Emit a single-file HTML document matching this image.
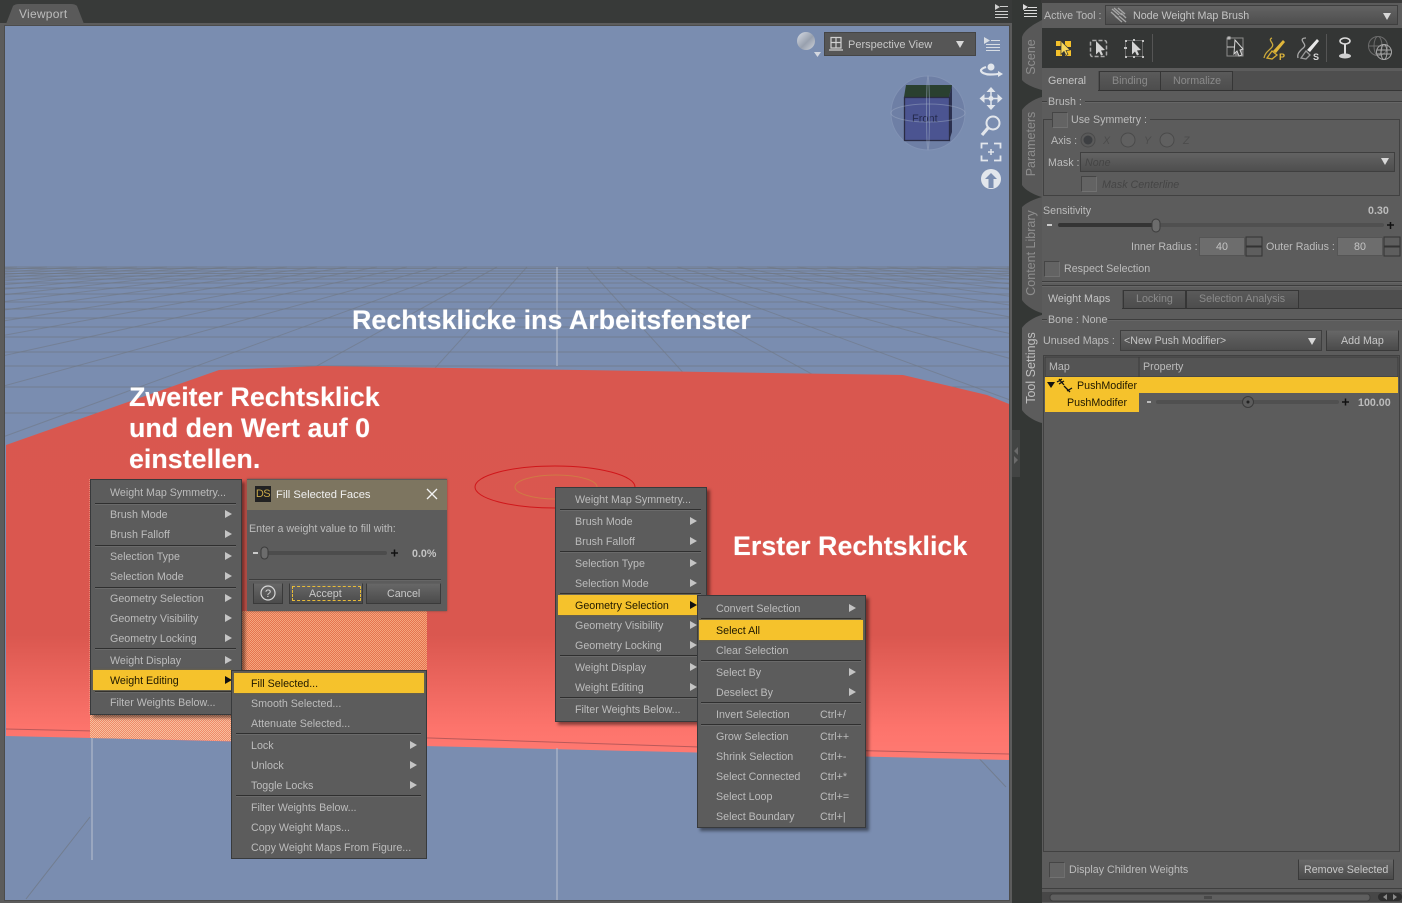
<!DOCTYPE html>
<html><head><meta charset="utf-8"><title>Viewport</title>
<style>
html,body{margin:0;padding:0;width:1402px;height:903px;overflow:hidden;background:#5c5c5c}
body{position:relative;font:10.7px "Liberation Sans",Arial,sans-serif;color:#bcbcbc}
.b{position:absolute;box-sizing:border-box}
.t{position:absolute;white-space:nowrap;line-height:14px;height:14px;margin-top:1px}
svg{position:absolute;left:0;top:0}
.h{position:absolute;color:#fff;font-weight:bold;font-size:26.85px;line-height:31px;white-space:nowrap;margin-top:1px;text-shadow:0 0 1px rgba(255,255,255,.4)}
.m{position:absolute;box-sizing:border-box;background:#5c5c5c;border:1px solid #383a3c;box-shadow:3px 3px 3px rgba(0,0,0,.45)}
.s{position:absolute;height:1px;background:#2f2f2f;box-shadow:0 1px 0 #6a6a6a}
.y{position:absolute;background:#f5c22c;box-shadow:0 0 2px #7a6a30}
.k{color:#1f1800}
.a{position:absolute;width:0;height:0;border-left:7px solid #c4c4c4;border-top:4px solid transparent;border-bottom:4px solid transparent}
.btn{position:absolute;box-sizing:border-box;background:linear-gradient(#676767,#4b4b4b);border:1px solid #3a3a3a;border-top-color:#5f5f5f}
.dd{position:absolute;box-sizing:border-box;background:linear-gradient(#636363,#4e4e4e);border:1px solid #3f3f3f}
.tri{position:absolute;width:0;height:0;border-top:7px solid #d8d8d8;border-left:4px solid transparent;border-right:4px solid transparent}
.tab{position:absolute;box-sizing:border-box;background:linear-gradient(#5a5a5a,#4d4d4d);border:1px solid #363636;border-bottom-color:#333;color:#8a8a8a}
.cb{position:absolute;box-sizing:border-box;width:16px;height:16px;background:#636363;border:1px solid #454545;border-right-color:#6f6f6f;border-bottom-color:#727272}
.l{position:absolute;height:1px;background:#3d3d3d;box-shadow:0 1px 0 #666}
</style></head><body>

<!-- top bar + viewport svg -->
<svg width="1402" height="903" viewBox="0 0 1402 903">
<defs>
<linearGradient id="rd" gradientUnits="userSpaceOnUse" x1="0" y1="370" x2="0" y2="760">
<stop offset="0" stop-color="#d9574f"/><stop offset=".68" stop-color="#da574f"/><stop offset=".92" stop-color="#fd746c"/><stop offset="1" stop-color="#ff7a72"/></linearGradient>
<pattern id="ch" width="2" height="2" patternUnits="userSpaceOnUse"><rect width="2" height="2" fill="#e6734e"/><rect width="1" height="1" fill="#f4a67e"/><rect x="1" y="1" width="1" height="1" fill="#f4a67e"/></pattern>
<pattern id="ch2" width="2" height="2" patternUnits="userSpaceOnUse"><rect width="2" height="2" fill="#f08a68"/><rect width="1" height="1" fill="#f7bf9e"/><rect x="1" y="1" width="1" height="1" fill="#f7bf9e"/></pattern>
<linearGradient id="sph" x1="0" y1="0" x2="1" y2="1"><stop offset="0" stop-color="#d8dde6"/><stop offset=".55" stop-color="#98a0ae"/><stop offset="1" stop-color="#d0d4da"/></linearGradient>
<clipPath id="vp"><rect x="5" y="26" width="1004" height="874"/></clipPath>
</defs>
<rect width="1012" height="903" fill="#5c5c5c"/>
<rect width="1012" height="23" fill="#383a39"/>
<path d="M6 24 L13 6 Q15 4 19 4 L71 4 Q75 4 77 6 L84 24Z" fill="#5a5a5a"/>
<rect x="5" y="26" width="1004" height="874" fill="#7a8db0"/>
<rect x="4.500" y="25.500" width="1005" height="875" fill="none" stroke="#4c4c4c"/>
<!-- grid -->
<g clip-path="url(#vp)" fill="none" stroke="#6f7682">
<path opacity=".7" d="M5 267H1009M5 268.500H1009M5 271H1009M5 273.500H1009M5 276H1009M5 279H1009M5 283H1009M5 288H1009M5 294H1009M5 302H1009M5 309H1009M5 318H1009M5 327H1009M5 337H1009M5 352H1009M5 366H1009M5 387H1009M5 413H1009"/>
<path opacity=".55" d="M587 267L749 445M617 267L941 445M647 267L1133 445M677 267L1325 445M707 267L1517 445M737 267L1709 445M767 267L1901 445M797 267L2093 445M827 267L2285 445M857 267L2477 445M887 267L2669 445M917 267L2861 445M947 267L3053 445M977 267L3245 445M1007 267L3437 445M527 267L365 445M497 267L173 445M467 267L-19 445M437 267L-211 445M407 267L-403 445M377 267L-595 445M347 267L-787 445M317 267L-979 445M287 267L-1171 445M257 267L-1363 445M227 267L-1555 445M197 267L-1747 445M167 267L-1939 445M137 267L-2131 445M107 267L-2323 445M77 267L-2515 445M47 267L-2707 445M17 267L-2899 445"/>
<path opacity=".7" d="M90 817L26 899M974 753L1006 787"/>
</g>
<path d="M557 267V366M92 730V860" stroke="#b9c1cf" stroke-width="1"/>
<!-- red -->
<path d="M6 445L219 370L322 366L903 375L987 395L1009 404V760L6 736Z" fill="url(#rd)"/>
<path d="M6 729L230 734L430 738L700 747L1009 754" stroke="#b9595a" fill="none"/>
<path d="M557 748V900" stroke="#b9c1cf"/>
<ellipse cx="555" cy="487" rx="80" ry="21" fill="none" stroke="#d0161a" stroke-width="1"/>
<ellipse cx="556" cy="487" rx="41" ry="12" fill="none" stroke="#cf7a45" stroke-width="1"/>
<!-- selection hatch -->
<rect x="242" y="611" width="185" height="60" fill="url(#ch)"/>
<path d="M90 715H232V741L90 738Z" fill="url(#ch2)"/>
<path d="M90 479V715" stroke="#f0b89a" stroke-dasharray="1 1"/>
<!-- sphere + nav -->
<circle cx="806" cy="41" r="9" fill="url(#sph)"/>
<path d="M814 52h7l-3.500 5z" fill="#d4d8e0"/>
<circle cx="928" cy="113" r="37" fill="#6e7fa5" stroke="#8192b4" stroke-width="1"/>
<path d="M906 85L952 85L949 97L904 97Z" fill="#2a4030"/>
<path d="M949 97L952 85V132L949 141Z" fill="#2c3150"/>
<rect x="904.500" y="97.500" width="45" height="43" fill="#4b5491" stroke="#2a2c44" stroke-width="1.300"/>
<text x="912" y="122" font-family="Liberation Sans" font-size="11" fill="#252a4d">Front</text>
<ellipse cx="928" cy="113" rx="37" ry="9" fill="none" stroke="#a0adc6" stroke-width="1" opacity=".45"/>
<ellipse cx="928" cy="113" rx="1.500" ry="37" fill="none" stroke="#a0adc6" stroke-width="1" opacity=".5"/>
<!-- nav icons -->
<g stroke="#e2e6ec" fill="none">
<path d="M986 67c-3 1-5 2-5 3.500c0 2 4 4 9 4c4 0 7 0 10-1" stroke-width="2.200"/>
<circle cx="991" cy="67" r="3.500" fill="#e2e6ec" stroke="none"/>
<path d="M998 71l5 3l-5 3z" fill="#e2e6ec" stroke="none"/>
<path d="M991 87l4.500 5h-9zM991 110l4.500-5h-9zM979.500 98.500l5-4.500v9zM1002.500 98.500l-5-4.500v9z" fill="#e2e6ec" stroke="none"/>
<path d="M984 98.500h14M991 91v15" stroke-width="1.500"/>
<circle cx="991" cy="98.500" r="2.500" fill="#e2e6ec" stroke="none"/>
<circle cx="993" cy="123" r="6.500" stroke-width="2"/>
<path d="M988 128l-6 7" stroke-width="3.200"/>
<path d="M988 143.500h-6.500v5M994 143.500h6.500v5M988 160.500h-6.500v-5M994 160.500h6.500v-5" stroke-width="1.800"/>
<path d="M988 152h6M991 149v6" stroke-width="1.500"/>
</g>
<circle cx="991" cy="179" r="10" fill="#e2e6ec"/>
<path d="M991 173l6 6h-3.500v9h-5v-9h-3.500z" fill="#7a8db0"/>
<!-- window icon -->
<rect x="824.500" y="32.500" width="151" height="23" fill="#565656" stroke="#454545"/>
<path d="M831 37.500h10v10.500h-10zM836 37.500v10.500M831 42.500h10M829 50h14" stroke="#d0d0d0" fill="none" stroke-width="1.200"/>
<!-- menu glyphs top -->
<g fill="#d8dde4">
<path d="M984 37l6 3.500l-6 3.500z"/><path d="M991 40h9v1h-9zM986 44h14v1h-14zM986 47h14v1h-14zM986 50h14v1h-14z"/>
</g>
<g fill="#cfcfcf">
<path d="M995 4l5 3l-5 3z"/><path d="M1000 6h8v1h-8zM995 11h13v1h-13zM995 14h13v1h-13zM995 17h13v1h-13z"/>
</g>
<!-- strip -->
<rect x="1012" y="0" width="390" height="903" fill="#5c5c5c"/>
<rect x="1012" y="0" width="30" height="903" fill="#343735"/>
<rect x="1041" y="0" width="361" height="3" fill="#3a3a3a"/>
<rect x="1012" y="430" width="8" height="47" fill="#424443"/>
<path d="M1018 447l-4 4l4 4zM1014 456l4 4l-4 4z" fill="#6a6a6a"/>
<g fill="#585858">
<path d="M1022 37C1024 30 1034 24 1042 20V90C1034 88 1025 84 1022 80Z"/>
<path d="M1022 110C1025 105 1034 99 1042 97V197C1034 195 1025 190 1022 185Z"/>
<path d="M1022 207C1026 203 1034 199 1042 197V313C1034 311 1025 305 1022 300Z"/>
</g>
<path d="M1022 328C1025 323 1034 317 1042 315V423C1034 421 1025 415 1022 410Z" fill="#5c5c5c"/>
<g fill="#8e8e8e" font-family="Liberation Sans" font-size="12.500" text-anchor="middle">
<text transform="translate(1035 57) rotate(-90)">Scene</text>
<text transform="translate(1035 144) rotate(-90)">Parameters</text>
<text transform="translate(1035 253) rotate(-90)">Content Library</text>
<text transform="translate(1035 368) rotate(-90)" fill="#c0c0c0">Tool Settings</text>
</g>
<g fill="#dcdcdc">
<path d="M1023 4l5 3l-5 3z"/><path d="M1028 7h9v1h-9zM1024 10h13v1h-13zM1024 13h13v1h-13zM1024 16h13v1h-13z"/>
</g>
<!-- toolbar -->
<rect x="1042" y="28" width="360" height="40" fill="#343635"/>
<path d="M1152.500 34V62M1326.500 34V62" stroke="#555"/>
<!-- icon 1 -->
<g>
<path d="M1056 41h6v5h-6zM1065 41h6v6h-6zM1056 50h6v6h-6zM1065 50h6v6h-6z" fill="#f5c22c"/>
<path d="M1061 41l9 9l-4 .5l2 4l-2 1l-2-4l-3 3z" fill="#f7d75c" stroke="#343635" stroke-width=".7"/>
</g>
<rect x="1090.500" y="40.500" width="16" height="16" rx="2" fill="none" stroke="#a8a8a8" stroke-width="1.500" stroke-dasharray="4 2"/>
<path d="M1096 41l9 9l-4 .5l2 4l-2 1l-2-4l-3 3z" fill="#d4d4d4"/>
<rect x="1125.500" y="40.500" width="17" height="16" fill="none" stroke="#6a6a6a"/>
<path d="M1125 40h2v2h-2zM1133 39h2v2h-2zM1142 40h2v2h-2zM1125 56h2v2h-2zM1133 56h2v2h-2zM1142 56h2v2h-2zM1124 47h3v2h-3z" fill="#c4c4c4"/>
<path d="M1132 41l9 9l-4 .5l2 4l-2 1l-2-4l-3 3z" fill="#d4d4d4"/>
<!-- icon 4 -->
<path d="M1227 38h16v18h-16z" fill="none" stroke="#8c8c8c"/><path d="M1235 47h8v9h-8z" fill="#7a7a7a"/>
<path d="M1227 47h7M1228 37h2v2h-2z" stroke="#c8c8c8" fill="none"/>
<path d="M1235 40l8 9l-3 1l2 5l-3 1l-2-5l-3 3z" fill="#343635" stroke="#d6d6d6"/>
<!-- P brush -->
<path d="M1272 38c-5 2 3 5 0 9c-2 3-7 5-8 11" fill="none" stroke="#c9a83c" stroke-width="1.300"/>
<path d="M1285 42l-9 11l-3-2l10-11z" fill="#e0b63a"/><path d="M1272 51l5 4l-5 4l-5-1z" fill="none" stroke="#d6ad34" stroke-width="1.300"/>
<text x="1279" y="60" font-family="Liberation Sans" font-size="9" fill="#e4ba3c" font-weight="bold">P</text>
<!-- S brush -->
<path d="M1306 38c-3 0-5 1-3 4c2 3 3 4-1 7c-3 3-5 5-4 9" fill="none" stroke="#a8a8a8" stroke-width="1.300"/>
<path d="M1319 41l-9 11l-3-2l10-11z" fill="#e8e8e8"/><path d="M1306 51l4 4l-4 4l-5-1z" fill="none" stroke="#999" stroke-width="1.300"/>
<text x="1313" y="60" font-family="Liberation Sans" font-size="9" fill="#d8d8d8" font-weight="bold">S</text>
<!-- pin -->
<ellipse cx="1345" cy="41" rx="5" ry="3" fill="none" stroke="#dcdcdc" stroke-width="1.600"/>
<path d="M1345 44V54" stroke="#dcdcdc" stroke-width="2"/>
<ellipse cx="1345" cy="56" rx="6" ry="2.500" fill="#cfcfcf"/>
<!-- globes -->
<g fill="none" stroke="#6c6c6c"><circle cx="1378" cy="46" r="9.500"/><ellipse cx="1378" cy="46" rx="4" ry="9.500"/><path d="M1369 46h18"/></g>
<g fill="none" stroke="#a8a8a8"><circle cx="1384" cy="52" r="7.500"/><ellipse cx="1384" cy="52" rx="3" ry="7.500"/><path d="M1377 50h14M1377 54h14"/></g>
<!-- group box -->
<path d="M1052 119.500H1043.500V195.500H1399.500V119.500H1150" fill="none" stroke="#414141"/>
<!-- radio -->
<circle cx="1088" cy="140" r="7" fill="#5a5a5a" stroke="#4a4a4a"/><circle cx="1088" cy="140" r="4.500" fill="#3d3f42"/>
<circle cx="1128" cy="140" r="7" fill="#606060" stroke="#4a4a4a"/>
<circle cx="1167" cy="140" r="7" fill="#606060" stroke="#4a4a4a"/>
<!-- sens slider -->
<path d="M1047 225h5" stroke="#eee" stroke-width="1.500"/>
<rect x="1058" y="223" width="326" height="4" rx="2" fill="#505050"/>
<rect x="1058" y="223" width="98" height="4" rx="2" fill="#343434"/>
<rect x="1152" y="219" width="8" height="13" rx="4" fill="#6c6c6c" stroke="#3c3c3c"/>
<path d="M1387 225h7M1390.500 222v7" stroke="#111" stroke-width="1.500"/>
<!-- spinners -->
<path d="M1246 237h16v9h-16zM1246 247h16v9h-16zM1384 237h16v9h-16zM1384 247h16v9h-16z" fill="#5e5e5e" stroke="#333"/>
<!-- table -->
<rect x="1043.500" y="355.500" width="356" height="496" fill="none" stroke="#414141"/>
<rect x="1045" y="357" width="94" height="20" fill="#545454" stroke="#3b3b3b"/>
<rect x="1139" y="357" width="259" height="20" fill="#545454" stroke="#3b3b3b"/>
<rect x="1045" y="377" width="353" height="16" fill="#f5c22c"/>
<rect x="1045" y="393" width="94" height="19" fill="#f5c22c"/>
<path d="M1047 382h8l-4 6z" fill="#111"/>
<path d="M1059 379l5 6M1070 392l-6-6M1057 382l5-3M1067 391l5-3M1059 384l5-3" stroke="#111" stroke-width="1.300" fill="none"/>
<path d="M1147 402h4" stroke="#ddd" stroke-width="1.500"/>
<rect x="1156" y="400" width="183" height="4" rx="2" fill="#505050"/>
<circle cx="1248" cy="402" r="5.500" fill="#5c5c5c" stroke="#3a3a3a"/><circle cx="1248" cy="402" r="1.500" fill="#222"/>
<path d="M1342 402h7M1345.500 398.500v7" stroke="#111" stroke-width="1.500"/>
<!-- bottom scroll -->
<path d="M1042 888.500H1402" stroke="#3f3f3f"/>
<rect x="1042" y="892" width="360" height="10" fill="#474747"/>
<rect x="1050" y="894" width="320" height="7" rx="3" fill="#5f5f5f" stroke="#3d3d3d"/>
<path d="M1205 896v3M1207 896v3M1209 896v3M1211 896v3" stroke="#333"/>
<rect x="1378" y="893" width="24" height="8" rx="4" fill="#2d2d2d"/>
<path d="M1387 894l-4 3l4 3zM1393 894l4 3l-4 3z" fill="#8a8a8a"/>
</svg>

<div class="t" style="left:19px;top:6px;font-size:12px;letter-spacing:.25px;color:#bdbdbd">Viewport</div>
<div class="t" style="left:848px;top:37px;font-size:11px;color:#c8c8c8">Perspective View</div>
<div class="tri" style="left:956px;top:41px"></div>

<div class="h" style="left:352px;top:304px">Rechtsklicke ins Arbeitsfenster</div>
<div class="h" style="left:129px;top:381px">Zweiter Rechtsklick<br>und den Wert auf 0<br>einstellen.</div>
<div class="h" style="left:733px;top:530px">Erster Rechtsklick</div>

<!-- left menu -->
<div class="m" style="left:90px;top:479px;width:152px;height:236px"></div>
<div class="s" style="left:95px;top:503px;width:141px"></div>
<div class="s" style="left:95px;top:545px;width:141px"></div>
<div class="s" style="left:95px;top:587px;width:141px"></div>
<div class="s" style="left:95px;top:648px;width:141px"></div>
<div class="s" style="left:95px;top:691px;width:141px"></div>
<div class="y" style="left:93px;top:670px;width:139px;height:20px"></div>
<div class="t" style="left:110px;top:485px">Weight Map Symmetry...</div>
<div class="t" style="left:110px;top:507px">Brush Mode</div><div class="a" style="left:225px;top:510px"></div>
<div class="t" style="left:110px;top:527px">Brush Falloff</div><div class="a" style="left:225px;top:530px"></div>
<div class="t" style="left:110px;top:549px">Selection Type</div><div class="a" style="left:225px;top:552px"></div>
<div class="t" style="left:110px;top:569px">Selection Mode</div><div class="a" style="left:225px;top:572px"></div>
<div class="t" style="left:110px;top:591px">Geometry Selection</div><div class="a" style="left:225px;top:594px"></div>
<div class="t" style="left:110px;top:611px">Geometry Visibility</div><div class="a" style="left:225px;top:614px"></div>
<div class="t" style="left:110px;top:631px">Geometry Locking</div><div class="a" style="left:225px;top:634px"></div>
<div class="t" style="left:110px;top:653px">Weight Display</div><div class="a" style="left:225px;top:656px"></div>
<div class="t k" style="left:110px;top:673px">Weight Editing</div><div class="a" style="left:225px;top:676px;border-left-color:#111"></div>
<div class="t" style="left:110px;top:695px">Filter Weights Below...</div>

<!-- dialog -->
<div class="b" style="left:247px;top:479px;width:200px;height:132px;background:#5c5c5c;box-shadow:0 0 2px #6a4a40"></div>
<div class="b" style="left:247px;top:480px;width:200px;height:30px;background:#7d7560"></div>
<div class="b" style="left:255px;top:486px;width:16px;height:16px;background:#222;color:#c9a94a;font-size:11px;line-height:16px;text-align:center;letter-spacing:-.5px">DS</div>
<div class="t" style="left:276px;top:487px;font-size:11.2px;color:#f0f0f0">Fill Selected Faces</div>
<svg style="left:426px;top:488px" width="12" height="12"><path d="M1 1L11 11M11 1L1 11" stroke="#f2f2f2" stroke-width="1.300"/></svg>
<div class="t" style="left:249px;top:521px">Enter a weight value to fill with:</div>
<svg style="left:250px;top:545px" width="150" height="16"><path d="M3 8h5" stroke="#eee" stroke-width="1.500"/><rect x="14" y="6" width="123" height="4" rx="2" fill="#4c4c4c"/><rect x="11" y="2" width="7" height="12" rx="3.500" fill="#6c6c6c" stroke="#3c3c3c"/><path d="M141 8h7M144.500 4.500v7" stroke="#111" stroke-width="1.500"/></svg>
<div class="t" style="left:412px;top:546px;font-weight:bold;color:#c4c4c4">0.0%</div>
<div class="l" style="left:249px;top:579px;width:192px"></div>
<div class="btn" style="left:253px;top:583px;width:30px;height:21px"></div>
<svg style="left:258px;top:584px" width="20" height="18"><circle cx="10" cy="9" r="7" fill="none" stroke="#d8d8d8" stroke-width="1.200"/><text x="10" y="13" font-family="Liberation Sans" font-size="11" fill="#d8d8d8" text-anchor="middle">?</text></svg>
<div class="btn" style="left:289px;top:583px;width:74px;height:21px"></div>
<div class="b" style="left:292px;top:586px;width:69px;height:15px;border:1px dashed #e8bc38"></div>
<div class="t" style="left:309px;top:586px;color:#c8c8c8">Accept</div>
<div class="btn" style="left:366px;top:583px;width:75px;height:21px"></div>
<div class="t" style="left:387px;top:586px;color:#c8c8c8">Cancel</div>

<!-- left submenu -->
<div class="m" style="left:231px;top:670px;width:196px;height:189px;box-shadow:none"></div>
<div class="y" style="left:234px;top:673px;width:190px;height:20px"></div>
<div class="s" style="left:236px;top:733px;width:185px"></div>
<div class="s" style="left:236px;top:795px;width:185px"></div>
<div class="t k" style="left:251px;top:676px">Fill Selected...</div>
<div class="t" style="left:251px;top:696px">Smooth Selected...</div>
<div class="t" style="left:251px;top:716px">Attenuate Selected...</div>
<div class="t" style="left:251px;top:738px">Lock</div><div class="a" style="left:410px;top:741px"></div>
<div class="t" style="left:251px;top:758px">Unlock</div><div class="a" style="left:410px;top:761px"></div>
<div class="t" style="left:251px;top:778px">Toggle Locks</div><div class="a" style="left:410px;top:781px"></div>
<div class="t" style="left:251px;top:800px">Filter Weights Below...</div>
<div class="t" style="left:251px;top:820px">Copy Weight Maps...</div>
<div class="t" style="left:251px;top:840px">Copy Weight Maps From Figure...</div>

<!-- right menu -->
<div class="m" style="left:555px;top:487px;width:152px;height:235px"></div>
<div class="s" style="left:560px;top:509px;width:141px"></div>
<div class="s" style="left:560px;top:551px;width:141px"></div>
<div class="s" style="left:560px;top:593px;width:141px"></div>
<div class="s" style="left:560px;top:655px;width:141px"></div>
<div class="s" style="left:560px;top:697px;width:141px"></div>
<div class="y" style="left:558px;top:595px;width:139px;height:20px"></div>
<div class="t" style="left:575px;top:492px">Weight Map Symmetry...</div>
<div class="t" style="left:575px;top:514px">Brush Mode</div><div class="a" style="left:690px;top:517px"></div>
<div class="t" style="left:575px;top:534px">Brush Falloff</div><div class="a" style="left:690px;top:537px"></div>
<div class="t" style="left:575px;top:556px">Selection Type</div><div class="a" style="left:690px;top:559px"></div>
<div class="t" style="left:575px;top:576px">Selection Mode</div><div class="a" style="left:690px;top:579px"></div>
<div class="t k" style="left:575px;top:598px">Geometry Selection</div><div class="a" style="left:690px;top:601px;border-left-color:#111"></div>
<div class="t" style="left:575px;top:618px">Geometry Visibility</div><div class="a" style="left:690px;top:621px"></div>
<div class="t" style="left:575px;top:638px">Geometry Locking</div><div class="a" style="left:690px;top:641px"></div>
<div class="t" style="left:575px;top:660px">Weight Display</div><div class="a" style="left:690px;top:663px"></div>
<div class="t" style="left:575px;top:680px">Weight Editing</div><div class="a" style="left:690px;top:683px"></div>
<div class="t" style="left:575px;top:702px">Filter Weights Below...</div>

<!-- right submenu -->
<div class="m" style="left:697px;top:595px;width:169px;height:233px"></div>
<div class="s" style="left:701px;top:618px;width:160px"></div>
<div class="y" style="left:699px;top:620px;width:164px;height:20px"></div>
<div class="s" style="left:701px;top:660px;width:160px"></div>
<div class="s" style="left:701px;top:702px;width:160px"></div>
<div class="s" style="left:701px;top:724px;width:160px"></div>
<div class="t" style="left:716px;top:601px">Convert Selection</div><div class="a" style="left:849px;top:604px"></div>
<div class="t k" style="left:716px;top:623px">Select All</div>
<div class="t" style="left:716px;top:643px">Clear Selection</div>
<div class="t" style="left:716px;top:665px">Select By</div><div class="a" style="left:849px;top:668px"></div>
<div class="t" style="left:716px;top:685px">Deselect By</div><div class="a" style="left:849px;top:688px"></div>
<div class="t" style="left:716px;top:707px">Invert Selection</div><div class="t" style="left:820px;top:707px">Ctrl+/</div>
<div class="t" style="left:716px;top:729px">Grow Selection</div><div class="t" style="left:820px;top:729px">Ctrl++</div>
<div class="t" style="left:716px;top:749px">Shrink Selection</div><div class="t" style="left:820px;top:749px">Ctrl+-</div>
<div class="t" style="left:716px;top:769px">Select Connected</div><div class="t" style="left:820px;top:769px">Ctrl+*</div>
<div class="t" style="left:716px;top:789px">Select Loop</div><div class="t" style="left:820px;top:789px">Ctrl+=</div>
<div class="t" style="left:716px;top:809px">Select Boundary</div><div class="t" style="left:820px;top:809px">Ctrl+|</div>

<!-- right panel -->
<div class="t" style="left:1044px;top:8px">Active Tool :</div>
<div class="dd" style="left:1105px;top:5px;width:293px;height:20px"></div>
<svg style="left:1110px;top:7px" width="18" height="17"><path d="M2 2l7 6M1 5l8 7M4 1l8 7M8 1l7 6M5 9l7 6M9 9l7 6M11 6l5 5" stroke="#a4a4a4" stroke-width="1.400"/></svg>
<div class="t" style="left:1133px;top:8px;color:#c4c4c4">Node Weight Map Brush</div>
<div class="tri" style="left:1383px;top:13px"></div>

<div class="b" style="left:1042px;top:71px;width:360px;height:20px;background:#4e4e4e;border-bottom:1px solid #363636"></div>
<div class="b" style="left:1042px;top:71px;width:56px;height:20px;background:#5c5c5c"></div>
<div class="t" style="left:1048px;top:73px;color:#c4c4c4">General</div>
<div class="tab" style="left:1099px;top:71px;width:62px;height:20px"></div><div class="t" style="left:1112px;top:73px;color:#8a8a8a">Binding</div>
<div class="tab" style="left:1160px;top:71px;width:73px;height:20px"></div><div class="t" style="left:1173px;top:73px;color:#8a8a8a">Normalize</div>

<div class="l" style="left:1042px;top:101px;width:5px"></div>
<div class="t" style="left:1048px;top:94px">Brush :</div>
<div class="l" style="left:1085px;top:101px;width:317px"></div>
<div class="cb" style="left:1052px;top:112px"></div>
<div class="t" style="left:1071px;top:112px">Use Symmetry :</div>
<div class="t" style="left:1051px;top:133px">Axis :</div>
<div class="t" style="left:1103px;top:133px;color:#4c4c4c;font-style:italic">X</div>
<div class="t" style="left:1144px;top:133px;color:#4c4c4c;font-style:italic">Y</div>
<div class="t" style="left:1183px;top:133px;color:#4c4c4c;font-style:italic">Z</div>
<div class="t" style="left:1048px;top:155px">Mask :</div>
<div class="dd" style="left:1080px;top:152px;width:315px;height:20px"></div>
<div class="t" style="left:1085px;top:155px;color:#454545;font-style:italic">None</div>
<div class="tri" style="left:1381px;top:158px"></div>
<div class="cb" style="left:1081px;top:176px"></div>
<div class="t" style="left:1102px;top:177px;color:#454545;font-style:italic">Mask Centerline</div>

<div class="t" style="left:1043px;top:203px">Sensitivity</div>
<div class="t" style="left:1368px;top:203px;font-weight:bold">0.30</div>
<div class="t" style="left:1131px;top:239px">Inner Radius :</div>
<div class="b" style="left:1199px;top:237px;width:46px;height:19px;background:#6d6d6d;border:1px solid #555;color:#c4c4c4;text-align:center;line-height:19px">40</div>
<div class="t" style="left:1266px;top:239px">Outer Radius :</div>
<div class="b" style="left:1337px;top:237px;width:46px;height:19px;background:#6d6d6d;border:1px solid #555;color:#c4c4c4;text-align:center;line-height:19px">80</div>
<div class="cb" style="left:1044px;top:261px"></div>
<div class="t" style="left:1064px;top:261px">Respect Selection</div>
<div class="l" style="left:1042px;top:281px;width:360px"></div>
<div class="l" style="left:1042px;top:285px;width:360px"></div>

<div class="b" style="left:1042px;top:290px;width:360px;height:19px;background:#4e4e4e;border-bottom:1px solid #363636"></div>
<div class="b" style="left:1042px;top:290px;width:80px;height:19px;background:#5c5c5c"></div>
<div class="t" style="left:1048px;top:291px;color:#c4c4c4">Weight Maps</div>
<div class="tab" style="left:1123px;top:290px;width:63px;height:19px"></div><div class="t" style="left:1136px;top:291px;color:#8a8a8a">Locking</div>
<div class="tab" style="left:1186px;top:290px;width:113px;height:19px"></div><div class="t" style="left:1199px;top:291px;color:#8a8a8a">Selection Analysis</div>

<div class="l" style="left:1042px;top:319px;width:5px"></div>
<div class="t" style="left:1048px;top:312px">Bone : None</div>
<div class="l" style="left:1108px;top:319px;width:294px"></div>
<div class="t" style="left:1043px;top:333px">Unused Maps :</div>
<div class="dd" style="left:1120px;top:330px;width:202px;height:21px"></div>
<div class="t" style="left:1124px;top:333px;color:#c4c4c4">&lt;New Push Modifier&gt;</div>
<div class="tri" style="left:1308px;top:338px"></div>
<div class="btn" style="left:1326px;top:330px;width:73px;height:21px"></div>
<div class="t" style="left:1341px;top:333px;color:#c8c8c8">Add Map</div>
<div class="t" style="left:1049px;top:359px">Map</div>
<div class="t" style="left:1143px;top:359px">Property</div>
<div class="t k" style="left:1077px;top:378px">PushModifer</div>
<div class="t k" style="left:1067px;top:395px">PushModifer</div>
<div class="t" style="left:1358px;top:395px;font-weight:bold">100.00</div>
<div class="cb" style="left:1049px;top:862px"></div>
<div class="t" style="left:1069px;top:862px">Display Children Weights</div>
<div class="btn" style="left:1298px;top:859px;width:96px;height:21px"></div>
<div class="t" style="left:1304px;top:862px;color:#c8c8c8">Remove Selected</div>
</body></html>
